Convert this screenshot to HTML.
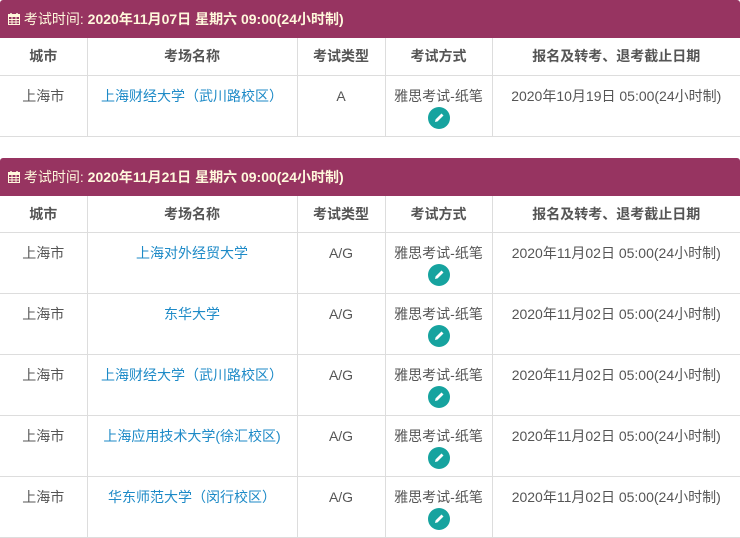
<!DOCTYPE html>
<html><head><meta charset="utf-8"><style>
body{margin:0;background:#fff;font-family:"Liberation Sans","Noto Sans CJK SC",sans-serif;font-size:14px;color:#555;}
.blk{position:relative;width:740px;}
.hd{height:38px;background:#973461;color:#fff8dc;font-weight:bold;font-size:14px;line-height:38px;padding-left:8px;box-sizing:border-box;border-radius:3px 3px 0 0;}
.hd span.n{font-weight:normal}
table{border-collapse:collapse;width:740px;table-layout:fixed;}
td,th{border:1px solid #ddd;text-align:center;vertical-align:top;padding:0;}
th{height:37px;line-height:37px;font-weight:bold;color:#555;}
.t2 th{height:36px;line-height:36px;}
td{height:61px;padding-top:10px;box-sizing:border-box;line-height:20px;}
tr td:first-child,tr th:first-child{border-left:none}
tr td:last-child,tr th:last-child{border-right:none}
tr:first-child th{border-top:none}
a{color:#1d8ac7;text-decoration:none}
.ic{display:block;margin:1px auto 0;width:22px;height:22px;border-radius:50%;background:#16a39f;position:relative}
.ic svg{position:absolute;left:5px;top:5px}
</style></head><body>
<div class="blk">
<div class="hd"><svg width="12" height="12" viewBox="0 0 12 12" style="vertical-align:-1px"><rect x="0.5" y="1.5" width="11" height="10" fill="none" stroke="#fff8dc"/><rect x="0.5" y="1.5" width="11" height="2.5" fill="#fff8dc"/><path d="M4 4v7M8 4v7M1 6.5h10M1 9h10" stroke="#fff8dc"/><path d="M3 0v2M9 0v2" stroke="#fff8dc" stroke-width="1.5"/></svg> <span class="n">考试时间:</span> 2020年11月07日 星期六 09:00(24小时制)</div>
<table><colgroup><col style="width:87px"><col style="width:210px"><col style="width:88px"><col style="width:107px"><col></colgroup>
<tr><th>城市</th><th>考场名称</th><th>考试类型</th><th>考试方式</th><th>报名及转考、退考截止日期</th></tr>
<tr><td>上海市</td><td><a>上海财经大学（武川路校区）</a></td><td>A</td><td>雅思考试-纸笔<span class="ic"><svg width="12" height="12" viewBox="0 0 12 12"><path d="M2 10l0.6-2.6L8.5 1.5l2 2L4.6 9.4z" fill="#fff"/></svg></span></td><td>2020年10月19日 05:00(24小时制)</td></tr>
</table>
</div>
<div style="height:21px"></div>
<div class="blk">
<div class="hd"><svg width="12" height="12" viewBox="0 0 12 12" style="vertical-align:-1px"><rect x="0.5" y="1.5" width="11" height="10" fill="none" stroke="#fff8dc"/><rect x="0.5" y="1.5" width="11" height="2.5" fill="#fff8dc"/><path d="M4 4v7M8 4v7M1 6.5h10M1 9h10" stroke="#fff8dc"/><path d="M3 0v2M9 0v2" stroke="#fff8dc" stroke-width="1.5"/></svg> <span class="n">考试时间:</span> 2020年11月21日 星期六 09:00(24小时制)</div>
<table class="t2"><colgroup><col style="width:87px"><col style="width:210px"><col style="width:88px"><col style="width:107px"><col></colgroup>
<tr><th>城市</th><th>考场名称</th><th>考试类型</th><th>考试方式</th><th>报名及转考、退考截止日期</th></tr>
<tr><td>上海市</td><td><a>上海对外经贸大学</a></td><td>A/G</td><td>雅思考试-纸笔<span class="ic"><svg width="12" height="12" viewBox="0 0 12 12"><path d="M2 10l0.6-2.6L8.5 1.5l2 2L4.6 9.4z" fill="#fff"/></svg></span></td><td>2020年11月02日 05:00(24小时制)</td></tr>
<tr><td>上海市</td><td><a>东华大学</a></td><td>A/G</td><td>雅思考试-纸笔<span class="ic"><svg width="12" height="12" viewBox="0 0 12 12"><path d="M2 10l0.6-2.6L8.5 1.5l2 2L4.6 9.4z" fill="#fff"/></svg></span></td><td>2020年11月02日 05:00(24小时制)</td></tr>
<tr><td>上海市</td><td><a>上海财经大学（武川路校区）</a></td><td>A/G</td><td>雅思考试-纸笔<span class="ic"><svg width="12" height="12" viewBox="0 0 12 12"><path d="M2 10l0.6-2.6L8.5 1.5l2 2L4.6 9.4z" fill="#fff"/></svg></span></td><td>2020年11月02日 05:00(24小时制)</td></tr>
<tr><td>上海市</td><td><a>上海应用技术大学(徐汇校区)</a></td><td>A/G</td><td>雅思考试-纸笔<span class="ic"><svg width="12" height="12" viewBox="0 0 12 12"><path d="M2 10l0.6-2.6L8.5 1.5l2 2L4.6 9.4z" fill="#fff"/></svg></span></td><td>2020年11月02日 05:00(24小时制)</td></tr>
<tr><td>上海市</td><td><a>华东师范大学（闵行校区）</a></td><td>A/G</td><td>雅思考试-纸笔<span class="ic"><svg width="12" height="12" viewBox="0 0 12 12"><path d="M2 10l0.6-2.6L8.5 1.5l2 2L4.6 9.4z" fill="#fff"/></svg></span></td><td>2020年11月02日 05:00(24小时制)</td></tr>
</table>
</div>
</body></html>
